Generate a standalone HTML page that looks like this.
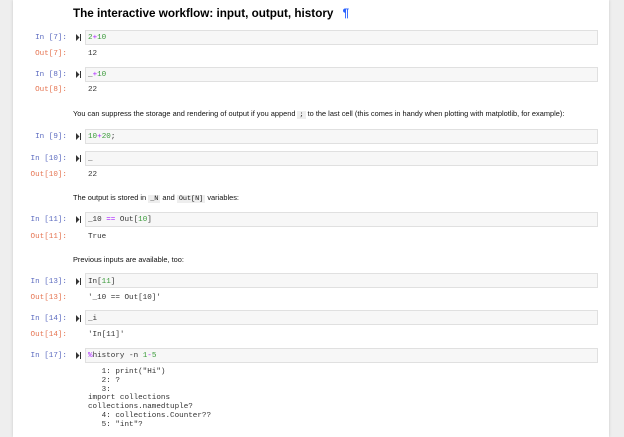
<!DOCTYPE html>
<html><head><meta charset="utf-8"><style>
body{margin:0;width:624px;height:437px;background:#eeeeee;position:relative;overflow:hidden;font-family:"Liberation Sans",sans-serif}
.panel{position:absolute;left:13px;top:0;width:596px;height:437px;background:#fff;box-shadow:0 0 3px rgba(0,0,0,.15)}
.a{position:absolute;white-space:pre}
.m{font-family:"Liberation Mono",monospace;font-size:7.6px;line-height:15px;margin-top:1px}
.in{color:#5c6bc0;text-align:right;width:67px;left:0}
.out{color:#e57350;text-align:right;width:67px;left:0}
.box{position:absolute;left:85px;width:513px;height:15px;background:#f7f7f7;border:1px solid #e0e0e0;box-sizing:border-box}
.code{left:88px;color:#333}
.run{position:absolute;left:76px;width:5px;height:7px}
.t{font-size:7.4px;color:#111;left:73px;line-height:9px}
.k{background:#eee;padding:0 2px;font-family:"Liberation Mono",monospace;font-size:6.8px}
.g{color:#3a9a3a}.p{color:#aa22ff}
</style></head><body>
<div class="panel"></div>
<div class="a" style="left:73px;top:7px;font-size:11.7px;font-weight:bold;color:#000">The interactive workflow: input, output, history <span style="color:#2962ff;margin-left:6px">¶</span></div>

<div class="box" style="top:30px"></div>
<div class="a m in" style="top:30px">In [7]:</div>
<div class="a m code" style="top:30px"><span class="g">2</span><span class="p">+</span><span class="g">10</span></div>
<div class="a m out" style="top:46px">Out[7]:</div>
<div class="a m code" style="top:46px">12</div>

<div class="box" style="top:67px"></div>
<div class="a m in" style="top:67px">In [8]:</div>
<div class="a m code" style="top:67px">_<span class="p">+</span><span class="g">10</span></div>
<div class="a m out" style="top:82px">Out[8]:</div>
<div class="a m code" style="top:82px">22</div>

<div class="a t" style="top:109px">You can suppress the storage and rendering of output if you append <span class="k">;</span> to the last cell (this comes in handy when plotting with matplotlib, for example):</div>

<div class="box" style="top:129px"></div>
<div class="a m in" style="top:129px">In [9]:</div>
<div class="a m code" style="top:129px"><span class="g">10</span><span class="p">+</span><span class="g">20</span>;</div>

<div class="box" style="top:151px"></div>
<div class="a m in" style="top:151px">In [10]:</div>
<div class="a m code" style="top:151px">_</div>
<div class="a m out" style="top:167px">Out[10]:</div>
<div class="a m code" style="top:167px">22</div>

<div class="a t" style="top:193px">The output is stored in <span class="k">_N</span> and <span class="k">Out[N]</span> variables:</div>

<div class="box" style="top:212px"></div>
<div class="a m in" style="top:212px">In [11]:</div>
<div class="a m code" style="top:212px">_10 <span class="p">==</span> Out[<span class="g">10</span>]</div>
<div class="a m out" style="top:229px">Out[11]:</div>
<div class="a m code" style="top:229px">True</div>

<div class="a t" style="top:255px">Previous inputs are available, too:</div>

<div class="box" style="top:273px"></div>
<div class="a m in" style="top:274px">In [13]:</div>
<div class="a m code" style="top:274px">In[<span class="g">11</span>]</div>
<div class="a m out" style="top:290px">Out[13]:</div>
<div class="a m code" style="top:290px">'_10 == Out[10]'</div>

<div class="box" style="top:310px"></div>
<div class="a m in" style="top:311px">In [14]:</div>
<div class="a m code" style="top:311px">_i</div>
<div class="a m out" style="top:327px">Out[14]:</div>
<div class="a m code" style="top:327px">'In[11]'</div>

<div class="box" style="top:348px"></div>
<div class="a m in" style="top:348px">In [17]:</div>
<div class="a m code" style="top:348px"><span class="p">%</span>history -n <span class="g">1</span><span class="p">-</span><span class="g">5</span></div>
<div class="a m code" style="top:367px;line-height:8.8px">   1: print("Hi")
   2: ?
   3:
import collections
collections.namedtuple?
   4: collections.Counter??
   5: "int"?</div>

<svg class="run" style="top:34px" viewBox="0 0 5 7"><path d="M0 0L3.5 3.5 0 7zM4 0h1v7H4z" fill="#333"/></svg>
<svg class="run" style="top:71px" viewBox="0 0 5 7"><path d="M0 0L3.5 3.5 0 7zM4 0h1v7H4z" fill="#333"/></svg>
<svg class="run" style="top:133px" viewBox="0 0 5 7"><path d="M0 0L3.5 3.5 0 7zM4 0h1v7H4z" fill="#333"/></svg>
<svg class="run" style="top:155px" viewBox="0 0 5 7"><path d="M0 0L3.5 3.5 0 7zM4 0h1v7H4z" fill="#333"/></svg>
<svg class="run" style="top:216px" viewBox="0 0 5 7"><path d="M0 0L3.5 3.5 0 7zM4 0h1v7H4z" fill="#333"/></svg>
<svg class="run" style="top:278px" viewBox="0 0 5 7"><path d="M0 0L3.5 3.5 0 7zM4 0h1v7H4z" fill="#333"/></svg>
<svg class="run" style="top:315px" viewBox="0 0 5 7"><path d="M0 0L3.5 3.5 0 7zM4 0h1v7H4z" fill="#333"/></svg>
<svg class="run" style="top:352px" viewBox="0 0 5 7"><path d="M0 0L3.5 3.5 0 7zM4 0h1v7H4z" fill="#333"/></svg>
</body></html>
